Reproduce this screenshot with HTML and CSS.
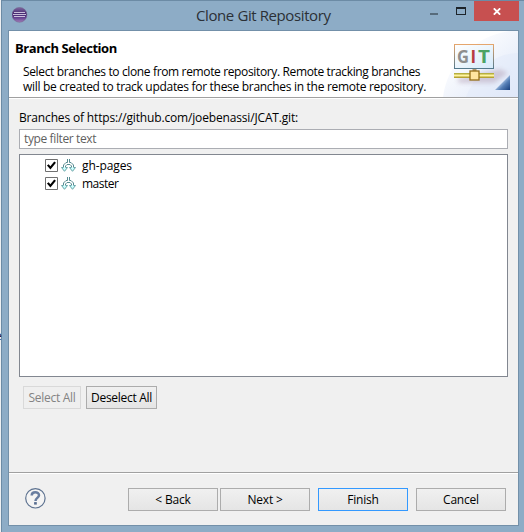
FILE: index.html
```html
<!DOCTYPE html>
<html lang="en">
<head>
<meta charset="utf-8">
<title>Clone Git Repository</title>
<link rel="stylesheet" href="styles.css">
</head>
<body>
<div class="desktop">
  <span class="behind">e</span>
  <div class="window">
    <header class="titlebar">
      <svg class="app-icon" width="16" height="16" viewBox="0 0 16 16">
        <defs><linearGradient id="orb" x1="0" y1="0" x2="0" y2="1"><stop offset="0" stop-color="#8068a0"/><stop offset=".45" stop-color="#43266f"/><stop offset=".7" stop-color="#654391"/><stop offset="1" stop-color="#a27fba"/></linearGradient></defs>
        <circle cx="7.5" cy="7.8" r="7.4" fill="url(#orb)" stroke="#705887" stroke-width=".5"/>
        <path d="M2 5.5h11M1 7.5h13M2 9.5h11" stroke="#e9e2f2" stroke-width=".8"/>
      </svg>
      <h1 class="title">Clone Git Repository</h1>
      <div class="controls">
        <span class="control minimize"></span>
        <span class="control maximize"></span>
        <span class="control close"><svg width="8" height="7" viewBox="0 0 8 7"><path d="M.8.3 7.2 6.7M7.2.3.8 6.7" stroke="#fff" stroke-width="1.8"/></svg></span>
      </div>
    </header>
    <main class="client">
      <section class="banner">
        <div class="banner-text">
          <h2>Branch Selection</h2>
          <p><span class="line-one">Select branches to clone from remote repository. Remote tracking branches</span><br><span class="line-two">will be created to track updates for these branches in the remote repository.</span></p>
        </div>
        <svg class="banner-art" width="75" height="66" viewBox="0 0 75 66">
          <defs>
            <linearGradient id="sky" x1="0" y1="0" x2="1" y2="1"><stop offset=".2" stop-color="#fff"/><stop offset="1" stop-color="#dde6f8"/></linearGradient>
            <linearGradient id="frame" x1="0" y1="0" x2="0" y2="1"><stop offset="0" stop-color="#e5a66d"/><stop offset="1" stop-color="#54798c"/></linearGradient>
            <linearGradient id="panel" x1="0" y1="0" x2="1" y2="1"><stop offset="0" stop-color="#fff"/><stop offset="1" stop-color="#d6eafa"/></linearGradient>
            <linearGradient id="pipe" x1="0" y1="0" x2="0" y2="1"><stop offset="0" stop-color="#a39d28"/><stop offset=".5" stop-color="#fff5a0"/><stop offset="1" stop-color="#a28d18"/></linearGradient>
            <linearGradient id="corner" x1="0" y1="0" x2="1" y2="1"><stop offset=".4" stop-color="#b9d0ed"/><stop offset=".65" stop-color="#557eb5"/><stop offset="1" stop-color="#153d7d"/></linearGradient>
            <filter id="soft" x="-20%" y="-50%" width="140%" height="200%"><feGaussianBlur stdDeviation="2"/></filter>
          </defs>
          <path d="M75 0v66H0C4 34 29 6 66 0z" fill="url(#sky)"/>
          <path d="M75 22C53 23 38 33 23 66h52z" fill="#e2e9f9" opacity=".5"/>
          <g transform="translate(2 1)">
            <path d="M12 47 55 37l8 4-14 10H14z" fill="#b9a9bd" opacity=".55" filter="url(#soft)"/>
            <rect x="9.5" y="12.5" width="39" height="24" fill="url(#panel)" stroke="url(#frame)"/>
            <path d="M29.5 37v5" stroke="#b29a72" stroke-width="4"/>
            <rect x="9" y="41" width="40" height="5" fill="url(#pipe)"/>
            <rect x="25" y="39" width="9" height="9" fill="#ffe5a0" stroke="#956f18" stroke-width="1.3"/>
            <g class="git-word"><text x="12" y="31" fill="#8e8e8e" textLength="12" lengthAdjust="spacingAndGlyphs">G</text><text x="25.5" y="31" fill="#b83c43">I</text><text x="33" y="31" fill="#4ca365" textLength="12" lengthAdjust="spacingAndGlyphs">T</text></g>
            <path d="M65 43v15H50z" fill="url(#corner)"/>
          </g>
        </svg>
      </section>
      <section class="page">
        <label class="caption" for="filter">Branches of https://github.com/joebenassi/JCAT.git:</label>
        <div class="filter" id="filter"><span>type filter text</span></div>
        <div class="tree">
          <div class="row"><svg class="check" width="13" height="13" viewBox="0 0 13 13"><path class="box" d="M.5.5h12v12H.5z"/><path class="tick" d="m2.8 5.9 2.6 3 4.7-5.8"/></svg><svg class="branch" width="16" height="14" viewBox="0 0 16 14"><path class="limb" d="M6.5 0v3.5H5L2.5 6v2.5M8.5 0v3.5H10L12.5 6v2.5M4.5 8.5V7L6 5.5h3L10.5 7v1.5"/><path class="tip" d="M2.5 8.5h-2l3 3.8 3-3.8h-2M10.5 8.5h-2l3 3.8 3-3.8h-2"/></svg><span class="branch-name">gh-pages</span></div>
          <div class="row"><svg class="check" width="13" height="13" viewBox="0 0 13 13"><path class="box" d="M.5.5h12v12H.5z"/><path class="tick" d="m2.8 5.9 2.6 3 4.7-5.8"/></svg><svg class="branch" width="16" height="14" viewBox="0 0 16 14"><path class="limb" d="M6.5 0v3.5H5L2.5 6v2.5M8.5 0v3.5H10L12.5 6v2.5M4.5 8.5V7L6 5.5h3L10.5 7v1.5"/><path class="tip" d="M2.5 8.5h-2l3 3.8 3-3.8h-2M10.5 8.5h-2l3 3.8 3-3.8h-2"/></svg><span class="branch-name master">master</span></div>
        </div>
        <div class="selection">
          <button class="select-all" disabled>Select All</button>
          <button class="deselect-all">Deselect All</button>
        </div>
      </section>
      <footer class="footer">
        <svg class="help" width="21" height="21" viewBox="0 0 21 21"><circle cx="10.4" cy="10.3" r="9.7" fill="#f4f4f4" stroke="#5d7290" stroke-width="1.2"/><path d="M6.7 7.5C6.8 3.2 14 3.4 14 7.2c0 2.6-3.5 2.8-3.5 5.7" fill="none" stroke="#687da0" stroke-width="2.5"/><path d="M9.1 14.1h2.7v2.5H9.1z" fill="#596e90"/></svg>
        <button class="back">&lt; Back</button>
        <button class="next">Next &gt;</button>
        <button class="finish">Finish</button>
        <button class="cancel">Cancel</button>
      </footer>
    </main>
  </div>
</div>
</body>
</html>
```
FILE: styles.css
```css
* { box-sizing: border-box; }
body { margin: 0; font: 12px/15px "Open Sans", "Noto Sans", sans-serif; color: #000; overflow: hidden; }
h1, h2, p { margin: 0; font: inherit; white-space: nowrap; }
svg { display: block; flex: none; }
.desktop { position: relative; width: 524px; height: 532px; padding-left: 1px; background: #eef0f2; overflow: hidden; }
.behind { position: absolute; left: -5px; top: 328px; color: #223; }
.window { height: 532px; background: #8dacc6; border-top: 1px solid #6c8ba5; border-left: 1px solid #6c8ba5; padding: 0 5px 0 6px; }
.titlebar { display: flex; height: 29px; position: relative; }
.app-icon { margin: 6px 0 0 4px; }
.title { margin: 4px 0 0 168px; font-size: 15px; line-height: 21px; color: #2b3036; letter-spacing: -.4px; }
.controls { display: flex; margin-left: auto; height: 20px; }
.control { display: block; }
.minimize { width: 8px; height: 2px; margin: 12px 18px 0 0; background: #576b7b; }
.maximize { width: 10px; height: 8px; margin: 6px 8px 0 0; border: 1px solid #1d242a; border-top-width: 2px; }
.close { width: 45px; height: 20px; background: #c75050; display: flex; align-items: center; justify-content: center; }
.client { display: flex; flex-direction: column; width: 511px; height: 496px; border: 1px solid #7390a9; background: #f0f0f0; }
.banner { display: flex; justify-content: space-between; height: 67px; background: #fff; border-bottom: 1px solid #a0a0a0; overflow: hidden; }
.banner-text { padding: 8px 0 0 6px; }
.git-word { font: bold 17px "Open Sans", sans-serif; }
.banner h2 { font-weight: 700; font-size: 13px; line-height: 18px; letter-spacing: -.45px; }
.banner p { margin-left: 8px; }
.banner h2 + p { margin-top: 7px; }
.line-one { letter-spacing: -.36px; }
.line-two { letter-spacing: -.3px; }
.page { flex: 1; padding: 11px 10px 0; border-top: 1px solid #fff; }
.caption { display: block; height: 19px; letter-spacing: -.16px; }
.filter { height: 20px; border: 1px solid #abadb3; background: #fff; padding: 1px 4px; color: #5f5f5f; letter-spacing: -.38px; }
.tree { height: 223px; margin-top: 5px; padding: 4px 0 0 25px; border: 1px solid #828790; background: #fff; }
.row { display: flex; align-items: flex-start; height: 18px; }
.branch { margin: 0 5px 0 3px; }
.branch-name { margin-top: -1px; letter-spacing: -.1px; }
.master { letter-spacing: -.5px; }
.box { fill: #fff; stroke: #707070; }
.tick { fill: none; stroke: #000; stroke-width: 2.2; }
.limb { fill: none; stroke: #578b91; stroke-width: 1; }
.tip { fill: #c8ffff; stroke: #6ba5a8; stroke-width: 1; }
.selection { display: flex; gap: 5px; padding: 9px 0 0 4px; }
button { height: 23px; padding: 0; font: inherit; color: #000; border: 1px solid #acacac; border-radius: 0; background: linear-gradient(#f0f0f0, #e5e5e5); white-space: nowrap; }
button:disabled { color: #838383; border-color: #d9d9d9; background: #efefef; }
.select-all, .deselect-all { letter-spacing: -.3px; }
.select-all { width: 58px; }
.deselect-all { width: 71px; }
.footer { display: flex; height: 53px; border-top: 1px solid #a0a0a0; box-shadow: inset 0 1px #fff; padding: 15px 0 0 16px; }
.back, .next, .finish, .cancel { width: 90px; letter-spacing: -.2px; }
.back { margin-left: 82px; }
.next { margin-left: 2px; }
.finish { margin-left: 8px; border-color: #3399ff; }
.cancel { margin-left: 8px; }
```
